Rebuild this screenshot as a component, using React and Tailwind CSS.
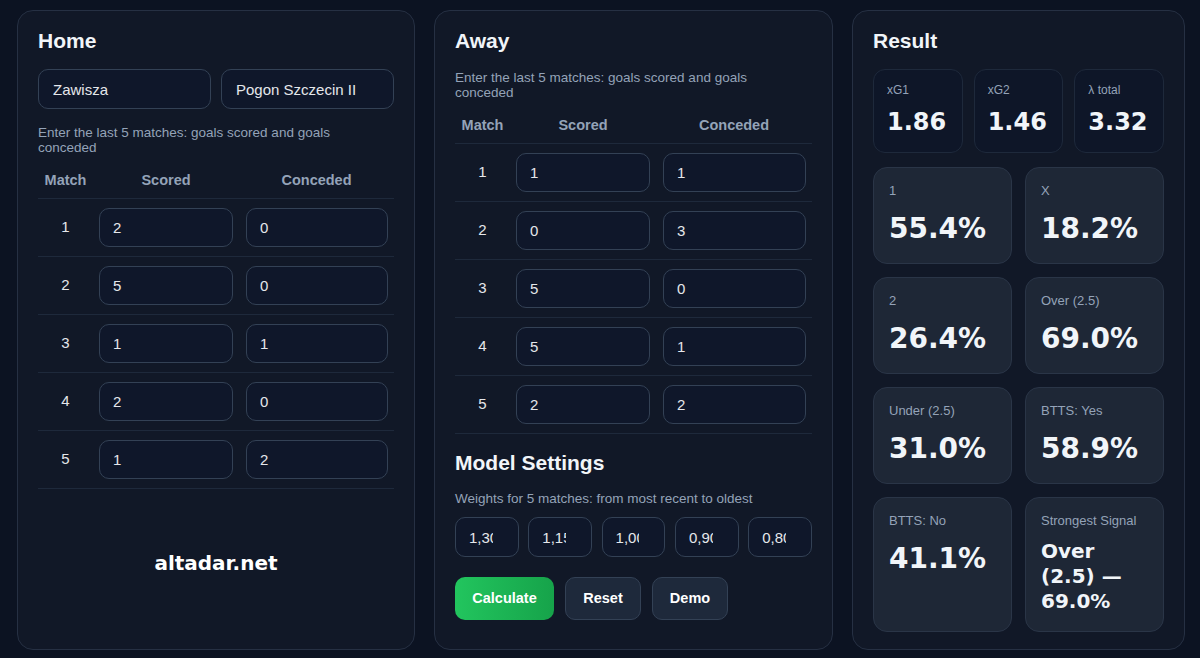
import React from 'react';

const home = [[2, 0], [5, 0], [1, 1], [2, 0], [1, 2]];
const away = [[1, 1], [0, 3], [5, 0], [5, 1], [2, 2]];
const weights = ['1,30', '1,15', '1,00', '0,90', '0,80'];

const font = { fontFamily: '"Liberation Sans", Arial, sans-serif' };
const heavy = { fontFamily: '"DejaVu Sans", "Liberation Sans", sans-serif' };

const inputCls =
  'w-full h-[39px] rounded-[10px] border border-[#334155] bg-[#0f172a] px-[13px] text-[15px] text-[#e5e7eb] outline-none';

// Matches table shared by Home and Away
const MatchTable = ({ rows }) => (
  <div>
    <div className="grid grid-cols-[55px_146px_1fr] pt-[9px] pb-[9px] leading-[18px] border-b border-[#1e293b] text-[14.5px] font-bold text-[#94a3b8]">
      <div className="text-center">Match</div>
      <div className="text-center">Scored</div>
      <div className="text-center">Conceded</div>
    </div>
    {rows.map((r, i) => (
      <div key={i} className="grid grid-cols-[55px_146px_1fr] items-center py-[9px] border-b border-[#1e293b]">
        <div className="text-center text-[#e5e7eb] text-[15px]">{i + 1}</div>
        <div className="px-[6px]">
          <input readOnly value={r[0]} className={inputCls} />
        </div>
        <div className="pl-[7px] pr-[6px]">
          <input readOnly value={r[1]} className={inputCls} />
        </div>
      </div>
    ))}
  </div>
);

const Stat = ({ label, value }) => (
  <div className="h-[84px] rounded-[12px] border border-[#1e293b] bg-[#0e1628] px-[13px] pt-[14px]">
    <div className="text-[12px] text-[#94a3b8] leading-none">{label}</div>
    <div style={heavy} className="mt-[14px] text-[24px] font-bold text-[#f1f5f9] leading-none">{value}</div>
  </div>
);

const Prob = ({ label, value, small }) => (
  <div className="rounded-[14px] border border-[#2a3547] bg-[#1e2736] px-[15px] pt-[16px] pb-[17px] min-h-[97px]">
    <div className="text-[13px] text-[#94a3b8] leading-none">{label}</div>
    {small ? (
      <div style={heavy} className="mt-[12px] text-[20px] font-bold text-[#f1f5f9] leading-[25px]">{value}</div>
    ) : (
      <div style={heavy} className="mt-[18px] text-[28px] font-bold text-[#f1f5f9] leading-none">{value}</div>
    )}
  </div>
);

const Panel = ({ children }) => (
  <div className="h-[640px] rounded-[16px] border border-[#263043] bg-[#111827] px-[20px] pt-[18px]">
    {children}
  </div>
);

const Title = ({ children, className = '' }) => (
  <h2 className={`text-[21px] font-bold text-[#f1f5f9] leading-[24px] ${className}`}>{children}</h2>
);

const Hint = ({ children, className = '' }) => (
  <p className={`text-[13.5px] leading-[15px] text-[#94a3b8] pr-[8px] ${className}`}>{children}</p>
);

export default function App() {
  return (
    <div style={font} className="w-[1200px] h-[658px] bg-[#0c1322] pt-[10px] pl-[17px] overflow-hidden">
      <div className="grid grid-cols-[398px_399px_333px] gap-x-[19px]">
        {/* Home */}
        <Panel>
          <Title>Home</Title>
          <div className="mt-[16px] grid grid-cols-2 gap-[10px]">
            <input readOnly value="Zawisza" className="h-[40px] rounded-[10px] border border-[#334155] bg-[#0f172a] px-[14px] text-[15px] text-[#e5e7eb] outline-none" />
            <input readOnly value="Pogon Szczecin II" className="h-[40px] rounded-[10px] border border-[#334155] bg-[#0f172a] px-[14px] text-[15px] text-[#e5e7eb] outline-none" />
          </div>
          <Hint className="mt-[16px]">Enter the last 5 matches: goals scored and goals conceded</Hint>
          <div className="mt-[7px]">
            <MatchTable rows={home} />
          </div>
          <div style={heavy} className="mt-[62px] text-center text-[20px] font-bold leading-[24px] text-white">altadar.net</div>
        </Panel>

        {/* Away */}
        <Panel>
          <Title>Away</Title>
          <Hint className="mt-[17px]">Enter the last 5 matches: goals scored and goals conceded</Hint>
          <div className="mt-[7px]">
            <MatchTable rows={away} />
          </div>
          <Title className="mt-[17px]">Model Settings</Title>
          <Hint className="mt-[16px]">Weights for 5 matches: from most recent to oldest</Hint>
          <div className="mt-[11px] grid grid-cols-5 gap-[9.5px]">
            {weights.map((w) => (
              <input key={w} readOnly value={w} className="w-full h-[40px] rounded-[10px] border border-[#334155] bg-[#0f172a] pl-[13px] pr-[25px] text-[15px] text-[#e5e7eb] outline-none" />
            ))}
          </div>
          <div className="mt-[20px] flex gap-[11px]">
            <button className="h-[43px] w-[99px] rounded-[10px] bg-gradient-to-r from-[#22c55e] to-[#16a34a] text-[14.5px] font-bold text-white">Calculate</button>
            <button className="h-[43px] w-[76px] rounded-[10px] border border-[#334155] bg-[#1e293b] text-[14.5px] font-bold text-white">Reset</button>
            <button className="h-[43px] w-[76px] rounded-[10px] border border-[#334155] bg-[#1e293b] text-[14.5px] font-bold text-white">Demo</button>
          </div>
        </Panel>

        {/* Result */}
        <Panel>
          <Title>Result</Title>
          <div className="mt-[16px] grid grid-cols-3 gap-[11px]">
            <Stat label="xG1" value="1.86" />
            <Stat label="xG2" value="1.46" />
            <Stat label="λ total" value="3.32" />
          </div>
          <div className="mt-[14px] grid grid-cols-2 gap-x-[13px] gap-y-[13px]">
            <Prob label="1" value="55.4%" />
            <Prob label="X" value="18.2%" />
            <Prob label="2" value="26.4%" />
            <Prob label="Over (2.5)" value="69.0%" />
            <Prob label="Under (2.5)" value="31.0%" />
            <Prob label="BTTS: Yes" value="58.9%" />
            <Prob label="BTTS: No" value="41.1%" />
            <Prob label="Strongest Signal" value="Over (2.5) — 69.0%" small />
          </div>
        </Panel>
      </div>
    </div>
  );
}
